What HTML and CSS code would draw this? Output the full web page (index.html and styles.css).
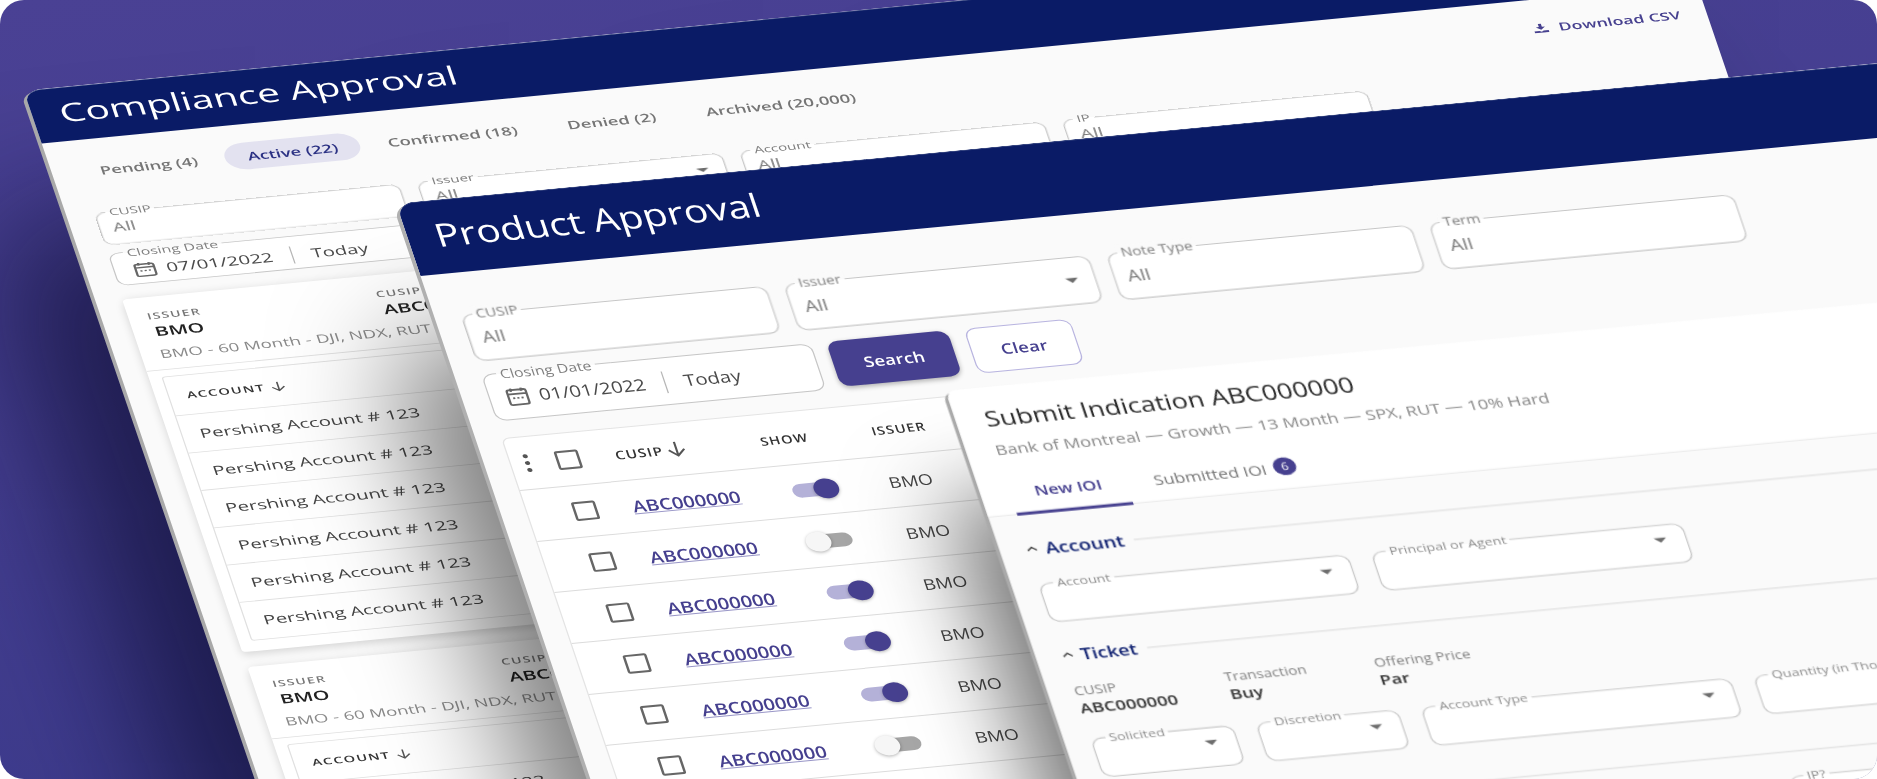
FILE: index.html
```html
<!DOCTYPE html>
<html lang="en">
<head>
<meta charset="utf-8">
<title>Approval screens</title>
<link rel="stylesheet" href="styles.css">
</head>
<body>
<svg class="defs" width="0" height="0" aria-hidden="true">
  <symbol id="cal" viewBox="0 0 24 24"><path d="M5 4h14a2 2 0 0 1 2 2v14a2 2 0 0 1-2 2H5a2 2 0 0 1-2-2V6a2 2 0 0 1 2-2zM3 9h18M7 2v4M17 2v4" fill="none" stroke="currentColor" stroke-width="2.2"/><path d="M7 13h2v2H7zM11 13h2v2h-2zM15 13h2v2h-2z" fill="currentColor"/></symbol>
  <symbol id="down" viewBox="0 0 16 16"><path d="M8 1.5v12.5M2.5 8.5 8 14l5.500-5.500" fill="none" stroke="currentColor" stroke-width="1.500"/></symbol>
  <symbol id="chev" viewBox="0 0 10 6"><path d="M1 5 5 1.500 9 5" fill="none" stroke="currentColor" stroke-width="1.400"/></symbol>
  <symbol id="dl" viewBox="0 0 16 16"><path d="M6.500 1h3v5h3L8 10.500 3.500 6h3z M1 12h5l2 1.500 2-1.500h5v3H1z" fill="currentColor"/></symbol>
</svg>
<main class="canvas">

  <section class="window compliance">
    <header class="win-head"><h1>Compliance Approval</h1></header>
    <div class="c-tabs">
      <nav class="pills">
        <span class="pill">Pending (4)</span>
        <span class="pill pill-on">Active (22)</span>
        <span class="pill">Confirmed (18)</span>
        <span class="pill">Denied (2)</span>
        <span class="pill">Archived (20,000)</span>
      </nav>
      <span class="download"><svg class="ic-dl"><use href="#dl"/></svg>Download CSV</span>
    </div>
    <div class="filters">
      <div class="row">
        <div class="field f-std"><label>CUSIP</label><span>All</span></div>
        <div class="field f-std"><label>Issuer</label><span>All</span><i class="caret"></i></div>
        <div class="field f-std"><label>Account</label><span>All</span></div>
        <div class="field f-std"><label>IP</label><span>All</span></div>
      </div>
      <div class="row">
        <div class="field f-date"><label>Closing Date</label><svg class="ic-cal"><use href="#cal"/></svg><span class="date">07/01/2022</span><span class="today">Today</span></div>
      </div>
    </div>
    <article class="c-card">
      <div class="c-card-head">
        <div class="kv"><small>ISSUER</small><b>BMO</b></div>
        <div class="kv"><small>CUSIP</small><b>ABC000000</b></div>
      </div>
      <p class="c-sub">BMO - 60 Month - DJI, NDX, RUT</p>
      <div class="inner">
        <div class="inner-head">ACCOUNT <svg class="ic-down"><use href="#down"/></svg></div>
        <div class="inner-row">Pershing Account # 123</div>
        <div class="inner-row">Pershing Account # 123</div>
        <div class="inner-row">Pershing Account # 123</div>
        <div class="inner-row">Pershing Account # 123</div>
        <div class="inner-row">Pershing Account # 123</div>
        <div class="inner-row">Pershing Account # 123</div>
      </div>
    </article>
    <article class="c-card">
      <div class="c-card-head">
        <div class="kv"><small>ISSUER</small><b>BMO</b></div>
        <div class="kv"><small>CUSIP</small><b>ABC000000</b></div>
      </div>
      <p class="c-sub">BMO - 60 Month - DJI, NDX, RUT</p>
      <div class="inner">
        <div class="inner-head">ACCOUNT <svg class="ic-down"><use href="#down"/></svg></div>
        <div class="inner-row">Pershing Account # 123</div>
      </div>
    </article>
  </section>

  <section class="window product">
    <header class="win-head"><h1>Product Approval</h1></header>
    <div class="filters">
      <div class="row">
        <div class="field f-std"><label>CUSIP</label><span>All</span></div>
        <div class="field f-std"><label>Issuer</label><span>All</span><i class="caret"></i></div>
        <div class="field f-std"><label>Note Type</label><span>All</span></div>
        <div class="field f-std"><label>Term</label><span>All</span></div>
      </div>
      <div class="row">
        <div class="field f-date"><label>Closing Date</label><svg class="ic-cal"><use href="#cal"/></svg><span class="date">01/01/2022</span><span class="today">Today</span></div>
        <button class="btn btn-main" type="button">Search</button>
        <button class="btn btn-line" type="button">Clear</button>
      </div>
    </div>
    <div class="grid-card">
      <div class="g-row g-head">
        <span class="kebab"><i></i><i></i><i></i></span>
        <i class="check"></i>
        <span class="th">CUSIP <svg class="ic-down big"><use href="#down"/></svg></span>
        <span class="th th-s">SHOW</span>
        <span class="th th-s">ISSUER</span>
      </div>
      <div class="g-row"><span></span><i class="check"></i><a class="link">ABC000000</a><span class="toggle on"></span><span class="cell">BMO</span></div>
      <div class="g-row"><span></span><i class="check"></i><a class="link">ABC000000</a><span class="toggle"></span><span class="cell">BMO</span></div>
      <div class="g-row"><span></span><i class="check"></i><a class="link">ABC000000</a><span class="toggle on"></span><span class="cell">BMO</span></div>
      <div class="g-row"><span></span><i class="check"></i><a class="link">ABC000000</a><span class="toggle on"></span><span class="cell">BMO</span></div>
      <div class="g-row"><span></span><i class="check"></i><a class="link">ABC000000</a><span class="toggle on"></span><span class="cell">BMO</span></div>
      <div class="g-row"><span></span><i class="check"></i><a class="link">ABC000000</a><span class="toggle"></span><span class="cell">BMO</span></div>
      <div class="g-row"><span></span><i class="check"></i><a class="link">ABC000000</a><span class="toggle on"></span><span class="cell">BMO</span></div>
    </div>

    <aside class="panel">
      <div class="panel-top">
        <h2>Submit Indication ABC000000</h2>
        <p class="panel-sub">Bank of Montreal — Growth — 13 Month — SPX, RUT — 10% Hard</p>
        <nav class="panel-tabs">
          <span class="ptab ptab-on">New IOI</span>
          <span class="ptab">Submitted IOI<em class="badge">6</em></span>
        </nav>
      </div>
      <div class="panel-body">
        <h3 class="sec"><svg class="ic-chev"><use href="#chev"/></svg>Account<i class="rule"></i></h3>
        <div class="row row-acc">
          <div class="field f-a"><label>Account</label><i class="caret"></i></div>
          <div class="field f-b"><label>Principal or Agent</label><i class="caret"></i></div>
        </div>
        <h3 class="sec sec-t"><svg class="ic-chev"><use href="#chev"/></svg>Ticket<i class="rule"></i></h3>
        <div class="facts">
          <div class="fact"><small>CUSIP</small><b>ABC000000</b></div>
          <div class="fact"><small>Transaction</small><b>Buy</b></div>
          <div class="fact"><small>Offering Price</small><b>Par</b></div>
        </div>
        <div class="row row-tick">
          <div class="field f-c"><label>Solicited</label><i class="caret"></i></div>
          <div class="field f-c"><label>Discretion</label><i class="caret"></i></div>
          <div class="field f-d"><label>Account Type</label><i class="caret"></i></div>
          <div class="field f-d"><label>Quantity (in Thousands)</label></div>
        </div>
        <hr class="sep">
        <div class="row row-ip">
          <div class="field f-ip"><label>IP?</label></div>
        </div>
      </div>
    </aside>
  </section>

</main>
</body>
</html>
```

FILE: styles.css
```css
* { box-sizing: border-box; }
html, body { margin: 0; padding: 0; background: #fff; }
body { font-family: "Open Sans", "Noto Sans", sans-serif; color: #333; overflow: hidden; }
.defs { position: absolute; }

.canvas {
  position: relative;
  width: 1877px;
  height: 779px;
  border-radius: 24px;
  overflow: hidden;
  background: linear-gradient(172deg, #4a4194 0%, #443e90 45%, #39398a 100%);
  filter: blur(0.3px);
}

/* windows on a free canvas */
.window {
  position: absolute;
  left: 0;
  top: 0;
  transform-origin: 0 0;
  background: #fafafa;
  border-radius: 14px 14px 0 0;
}
.compliance {
  width: 1324px;
  height: 900px;
  transform: matrix(1.25, -0.1206, 0.265, 0.777, 23.7, 90.7);
  box-shadow: -3px 2px 0 #a9a9a9, -70px 170px 130px rgba(8, 8, 40, 0.62);
}
.product {
  width: 1320px;
  height: 820px;
  overflow: hidden;
  transform: matrix(1.25, -0.1185, 0.331, 0.98, 396, 203.5);
  box-shadow: -3px 2px 0 #b0b0b0, -50px 140px 100px rgba(0, 0, 0, 0.5);
}

.win-head {
  display: flex;
  align-items: center;
  background: #0a1b66;
  border-top: 1px solid #34447f;
  border-radius: 14px 14px 0 0;
  padding-left: 22px;
}
.compliance .win-head { height: 68px; padding-bottom: 4px; }
.product .win-head { height: 74px; padding-bottom: 4px; }
h1 { margin: 0; color: #fff; font-weight: 500; font-size: 32px; line-height: 1.2; }

/* compliance tabs */
.c-tabs {
  display: flex;
  justify-content: space-between;
  align-items: center;
  height: 34px;
  margin-top: 23px;
  padding: 0 21px 0 20px;
}
.pills { display: flex; gap: 4px; }
.pill {
  display: flex;
  align-items: center;
  height: 34px;
  padding: 0 18px;
  border-radius: 17px;
  font-size: 14.500px;
  font-weight: 600;
  color: #757575;
}
.pill-on { background: #e3e2f0; color: #2c3284; }
.download {
  display: flex;
  align-items: center;
  gap: 8px;
  margin-bottom: 7px;
  font-size: 14px;
  font-weight: 600;
  color: #46408f;
}
.ic-dl { width: 13px; height: 13px; }

/* filters */
.filters { display: flex; flex-direction: column; padding-left: 21px; }
.compliance .filters { margin-top: 36px; gap: 10px; padding-left: 22px; }
.product .filters { margin-top: 42px; gap: 13px; }
.row { display: flex; gap: 14px; }

.field {
  position: relative;
  display: flex;
  align-items: center;
  background: #fff;
  border: 1px solid #c6c6c6;
  border-radius: 9px;
  padding: 0 13px 0 10px;
  font-size: 16px;
  color: #7a7a7a;
}
.compliance .field { padding-bottom: 2px; }
.field label {
  position: absolute;
  left: 8px;
  top: -8px;
  padding: 0 3px;
  font-size: 12px;
  line-height: 15px;
  color: #7f7f7f;
  background: linear-gradient(#fafafa 50%, #fff 50%);
}
.compliance .field { height: 42px; }
.product .field { height: 48px; }
.f-std { width: 244px; }
.f-date { width: 264px; color: #4a4a4a; font-size: 16px; padding-top: 1px; }
.compliance .f-date { padding: 5px 13px 0 12px; }
.f-date label { font-size: 12.500px; left: 11px; top: -7px; }
.ic-cal { width: 20px; height: 20px; flex: none; color: #666; margin-right: 7px; margin-left: 2px; }
.date { padding-right: 15px; border-right: 1px solid #b5b5b5; line-height: 22px; }
.today { padding-left: 15px; }
.caret {
  margin-left: auto;
  margin-top: -2px;
  border-style: solid;
  border-width: 5px 5px 0;
  border-color: #6d6d6d transparent transparent;
}

.btn {
  height: 46px;
  border-radius: 9px;
  font: 600 14.500px "Open Sans", sans-serif;
  letter-spacing: 0.2px;
}
.btn-main { width: 97px; margin-left: -2px; background: #46408f; color: #fff; border: 0; box-shadow: 0 2px 5px rgba(0, 0, 0, 0.3); }
.btn-line { width: 85px; margin-left: -1px; background: #fff; color: #46408f; border: 1px solid #b9b5e0; }

/* compliance cards */
.c-card {
  width: 540px;
  margin: 17px 0 19px 21px;
  height: 454px;
  background: #fff;
  border-radius: 4px;
  box-shadow: 0 3px 9px rgba(0, 0, 0, 0.16);
  overflow: hidden;
}
.c-card-head { display: flex; padding: 16px 15px 0; }
.c-card-head .kv { display: flex; flex-direction: column; }
.c-card-head .kv:first-child { width: 183px; }
.kv small { font-size: 11px; line-height: 15px; letter-spacing: 1px; color: #777; font-weight: 600; }
.kv b { margin-left: 2px; font-size: 16.500px; line-height: 26px; color: #222; font-weight: 600; }
.c-sub {
  margin: 5px 0 0;
  padding: 0 15px 12px;
  height: 31px;
  font-size: 14.700px;
  line-height: 20px;
  color: #8a8a8a;
  border-bottom: 1px solid #e0e0e0;
}
.inner { margin: 8px 0 0 10px; width: 520px; border: 1px solid #e0e0e0; border-radius: 3px; }
.inner-head {
  display: flex;
  align-items: center;
  gap: 4px;
  height: 50px;
  padding-left: 14px;
  font-size: 11.500px;
  font-weight: 600;
  letter-spacing: 1px;
  color: #333;
  border-bottom: 1px solid #e0e0e0;
}
.inner-row {
  display: flex;
  align-items: center;
  height: 48px;
  padding-left: 14px;
  font-size: 16px;
  color: #444;
  border-bottom: 1px solid #e0e0e0;
}
.inner-row:last-child { border-bottom: 0; }
.ic-down { width: 14px; height: 14px; color: #555; }
.ic-down.big { width: 18px; height: 18px; margin-left: 2px; }

/* product table */
.grid-card {
  width: 720px;
  margin: 17px 0 0 20px;
  background: #fff;
  border-radius: 6px 6px 0 0;
  border: 1px solid #e4e4e4;
}
.g-row {
  display: grid;
  grid-template-columns: 36px 47px 116px 89px 1fr;
  align-items: center;
  height: 52px;
  border-bottom: 1px solid #dcdcdc;
}
.g-head { height: 53px; }
.kebab { display: flex; flex-direction: column; gap: 3px; align-items: center; width: 26px; }
.kebab i { width: 4px; height: 4px; border-radius: 50%; background: #555; }
.check { display: block; width: 19px; height: 19px; border: 2px solid #666; border-radius: 2px; }
.th { display: flex; align-items: center; font-size: 12px; font-weight: 600; letter-spacing: 0.8px; color: #333; }
.th-s { font-size: 11.500px; }
.link { font-size: 16px; font-weight: 600; color: #46408f; text-decoration: underline; text-decoration-color: #9a97c8; }
.cell { font-size: 15px; color: #444; }
.toggle {
  position: relative;
  display: block;
  width: 34px;
  height: 14px;
  margin-left: 12px;
  border-radius: 7px;
  background: #a6a6a6;
}
.toggle::after {
  content: "";
  position: absolute;
  left: -3px;
  top: -3px;
  width: 20px;
  height: 20px;
  border-radius: 50%;
  background: #f6f6f6;
  box-shadow: 0 1px 3px rgba(0, 0, 0, 0.3);
}
.toggle.on { background: #b4b1d8; }
.toggle.on::after { left: 17px; background: #46408f; }

/* drawer on top of the product window */
.panel {
  position: absolute;
  left: 377px;
  top: 237px;
  width: 960px;
  height: 600px;
  background: #fafafa;
  border-radius: 8px 0 0 0;
  box-shadow: -3px 2px 0 #aaa, -30px 110px 80px rgba(0, 0, 0, 0.55);
}
.panel-top {
  height: 129px;
  padding: 16px 23px 0;
  background: #fff;
  border-radius: 8px 0 0 0;
  border-bottom: 1px solid #e0e0e0;
}
h2 { margin: 0; font-size: 21.400px; line-height: 30px; font-weight: 500; color: #2b2b2b; }
.panel-sub { margin: 7px 0 12px; font-size: 14.400px; line-height: 20px; color: #8a8a8a; }
.panel-tabs { display: flex; gap: 22px; }
.ptab {
  display: flex;
  align-items: center;
  height: 45px;
  font-size: 14px;
  font-weight: 500;
  color: #777;
}
.ptab-on {
  width: 93px;
  justify-content: center;
  color: #46408f;
  font-weight: 600;
  border-bottom: 3px solid #46408f;
}
.badge {
  width: 18px;
  height: 18px;
  margin: -4px 0 0 6px;
  border-radius: 50%;
  background: #46408f;
  color: #fff;
  font-size: 10px;
  font-style: normal;
  line-height: 18px;
  text-align: center;
}
.panel-body { padding: 22px 23px 0 21px; }
.sec {
  display: flex;
  align-items: center;
  margin: 0;
  height: 26px;
  font-size: 16px;
  font-weight: 600;
  color: #122372;
}
.sec-t { margin-top: 20px; font-size: 15.500px; }
.ic-chev { width: 9px; height: 6px; margin: 0 6px 0 0; color: #333; flex: none; }
.rule { flex: 1; height: 1px; margin-left: 8px; background: #d8d8d8; }
.row-acc { margin-top: 22px; gap: 18px; }
.product .panel .field { height: 40px; padding-right: 15px; }
.f-a { width: 248px; }
.f-b { width: 249px; }
.panel .field label { left: 11px; font-size: 11.300px; background: linear-gradient(#fafafa 50%, #fff 50%); color: #8c8c8c; }
.panel .caret { margin-top: -10px; }
.facts { display: flex; margin-top: 16px; }
.fact { display: flex; flex-direction: column; width: 120px; }
.fact small { font-size: 12px; line-height: 16px; color: #7f7f7f; }
.fact b { font-size: 14.500px; line-height: 20px; font-weight: 600; color: #333; }
.row-tick { margin-top: 20px; gap: 18px; }
.f-c { width: 114px; }
.f-d { width: 248px; }
.sep { margin: 38px 0 0; border: 0; border-top: 1px solid #d8d8d8; }
.row-ip { margin-top: 24px; padding-left: 531px; }
.f-ip { width: 248px; }
```
